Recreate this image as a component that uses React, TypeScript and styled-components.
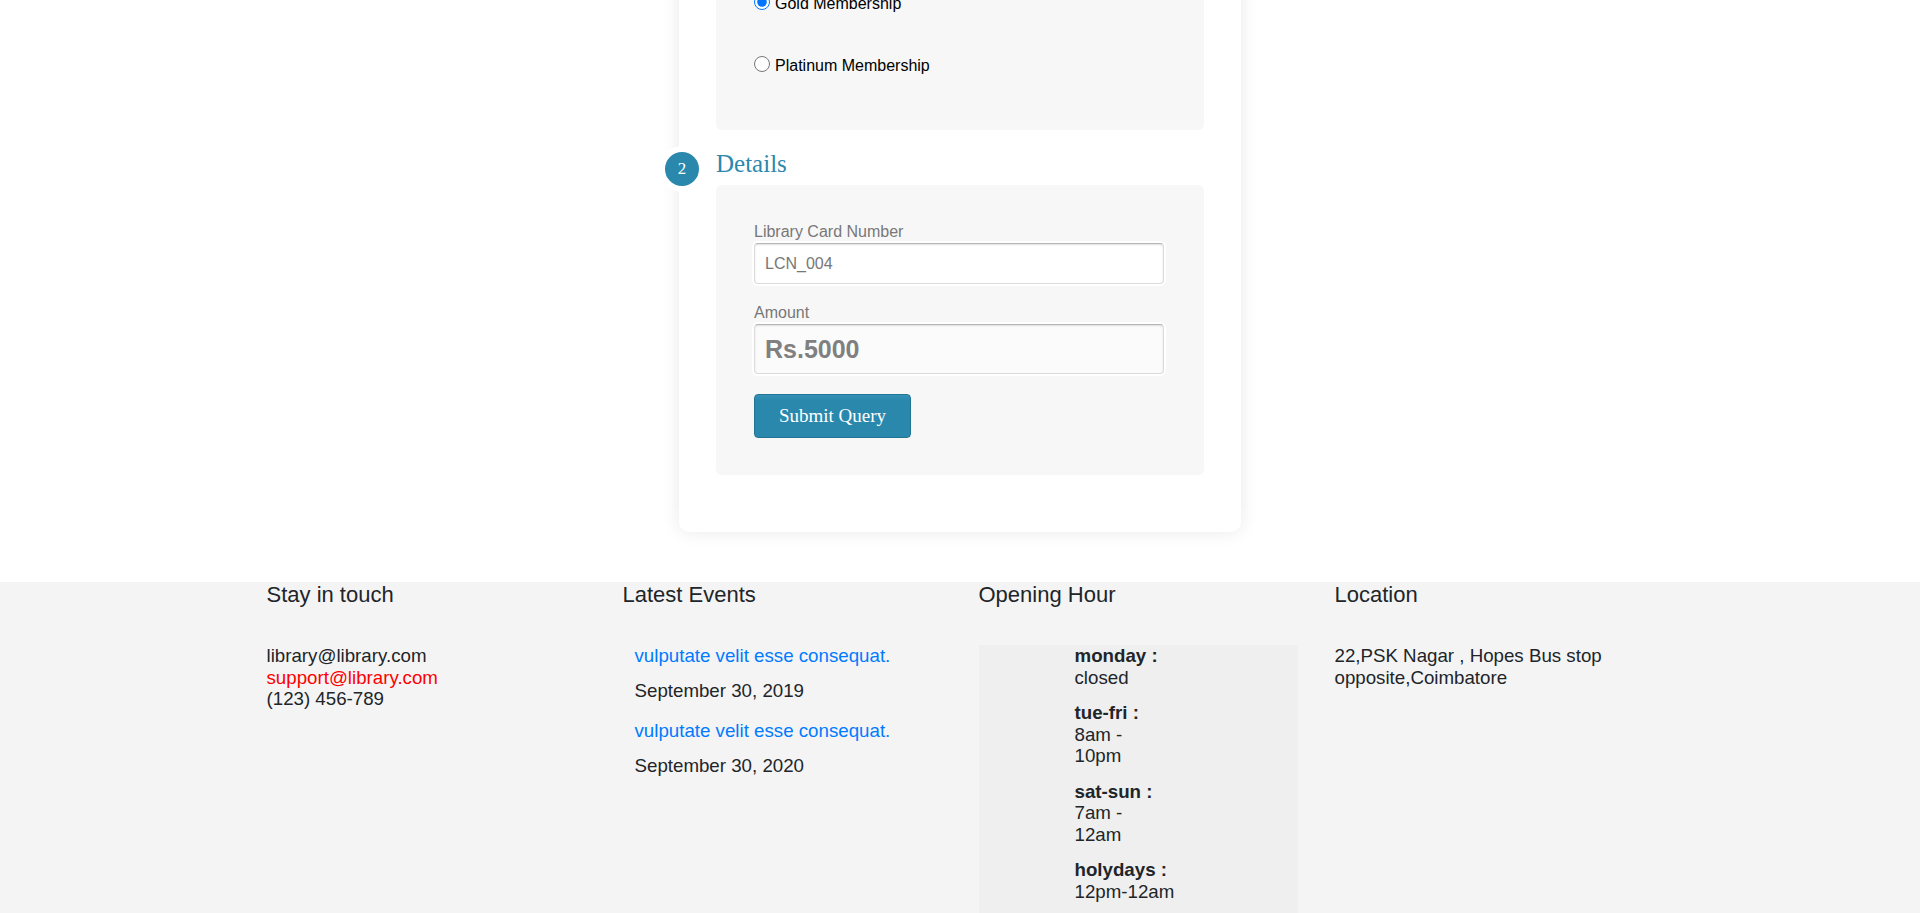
import styled, {createGlobalStyle} from 'styled-components';

const GlobalStyle = createGlobalStyle`
  body {
    margin: 0;
    background: #fff;
    font-family: "Liberation Sans", Arial, sans-serif;
    color: #212529;
  }
`;

const memberships = ['Silver Membership', 'Gold Membership', 'Platinum Membership'];

const events = [
  {title: 'vulputate velit esse consequat.', date: 'September 30, 2019'},
  {title: 'vulputate velit esse consequat.', date: 'September 30, 2020'},
];

const hours = [
  {day: 'monday :', time: 'closed', nowrap: false},
  {day: 'tue-fri :', time: '8am - 10pm', nowrap: false},
  {day: 'sat-sun :', time: '7am - 12am', nowrap: false},
  {day: 'holydays :', time: '12pm-12am', nowrap: true},
];

const App = () => {
  return (
    <>
      <GlobalStyle />
      <Main>
        <Card onSubmit={(e) => e.preventDefault()}>
          <SectionHeader $first>
            <StepBadge>1</StepBadge>
            <SectionTitle>Membership</SectionTitle>
          </SectionHeader>
          <Panel $top={26} $bottom={33}>
            {memberships.map((name) => (
              <RadioRow key={name}>
                <Radio type="radio" name="membership" defaultChecked={name === 'Gold Membership'} />
                {name}
              </RadioRow>
            ))}
          </Panel>

          <SectionHeader>
            <StepBadge>2</StepBadge>
            <SectionTitle>Details</SectionTitle>
          </SectionHeader>
          <Panel $top={37} $bottom={37}>
            <FieldLabel>Library Card Number</FieldLabel>
            <TextInput readOnly value="LCN_004" $height={41} $size={16} />
            <FieldLabel>Amount</FieldLabel>
            <TextInput readOnly value="Rs.5000" $height={50} $size={25} $bold />
            <SubmitButton type="submit">Submit Query</SubmitButton>
          </Panel>
        </Card>
      </Main>

      <Footer>
        <FooterColumn>
          <FooterHeading>Stay in touch</FooterHeading>
          <FooterText>library@library.com</FooterText>
          <FooterText $red>support@library.com</FooterText>
          <FooterText>(123) 456-789</FooterText>
        </FooterColumn>

        <FooterColumn>
          <FooterHeading>Latest Events</FooterHeading>
          <EventList>
            {events.map((ev) => (
              <li key={ev.date}>
                <EventLink href="#">{ev.title}</EventLink>
                <EventDate>{ev.date}</EventDate>
              </li>
            ))}
          </EventList>
        </FooterColumn>

        <FooterColumn>
          <FooterHeading>Opening Hour</FooterHeading>
          <HoursBox>
            {hours.map((h) => (
              <HoursItem key={h.day}>
                <dt>{h.day}</dt>
                <HoursTime $nowrap={h.nowrap}>{h.time}</HoursTime>
              </HoursItem>
            ))}
          </HoursBox>
        </FooterColumn>

        <FooterColumn>
          <FooterHeading>Location</FooterHeading>
          <FooterText>22,PSK Nagar , Hopes Bus stop opposite,Coimbatore</FooterText>
        </FooterColumn>
      </Footer>
    </>
  );
};

export default App;

const Main = styled.main`
  display: flex;
  justify-content: center;
  margin-top: -200px;
  padding-bottom: 50px;
`;

const Card = styled.form`
  width: 562px;
  box-sizing: border-box;
  background: #fff;
  border-radius: 10px;
  box-shadow: 0 0 18px rgba(0, 0, 0, 0.09);
  padding: 30px 37px 57px;
`;

const SectionHeader = styled.div<{$first?: boolean}>`
  position: relative;
  padding-top: ${(p) => (p.$first ? 0 : 15)}px;
  height: 39px;
  margin-bottom: 1px;
  margin-top: ${(p) => (p.$first ? 15 : 0)}px;
`;

const StepBadge = styled.span`
  position: absolute;
  left: -57px;
  bottom: -8px;
  width: 34px;
  height: 34px;
  border: 6px solid #fff;
  border-radius: 50%;
  background: #2b88ad;
  color: #fff;
  font-family: "Liberation Serif", "Times New Roman", serif;
  font-size: 17px;
  line-height: 34px;
  text-align: center;
`;

const SectionTitle = styled.h2`
  margin: 0;
  font-family: "Liberation Serif", "Times New Roman", serif;
  font-weight: 400;
  font-size: 25px;
  line-height: 38px;
  color: #2b88ad;
`;

const Panel = styled.div<{$top: number; $bottom: number}>`
  background: #f7f7f7;
  border-radius: 6px;
  padding: ${(p) => p.$top}px 38px ${(p) => p.$bottom}px;
`;

const RadioRow = styled.label`
  display: flex;
  align-items: center;
  gap: 5px;
  height: 62px;
  font-size: 16px;
  color: #000;
`;

const Radio = styled.input`
  width: 16px;
  height: 16px;
  margin: -4px 0 0;
`;

const FieldLabel = styled.label`
  display: block;
  font-size: 16px;
  line-height: 20px;
  color: #777;
  margin-bottom: 1px;
`;

const TextInput = styled.input<{$height: number; $size: number; $bold?: boolean}>`
  display: block;
  width: 410px;
  height: ${(p) => p.$height}px;
  box-sizing: border-box;
  margin: 0 0 19px;
  padding: 0 10px;
  border: 1px solid #dcdcdc;
  border-top-color: #b5b5b5;
  border-radius: 4px;
  box-shadow: inset 0 1px 2px rgba(0, 0, 0, 0.12), 0 0 0 2px #fff;
  background: ${(p) => (p.$bold ? '#fbfbfb' : '#fff')};
  font-family: "Liberation Sans", Arial, sans-serif;
  font-size: ${(p) => p.$size}px;
  font-weight: ${(p) => (p.$bold ? 700 : 400)};
  color: ${(p) => (p.$bold ? '#808080' : '#777')};
  outline: none;
`;

const SubmitButton = styled.button`
  display: block;
  width: 157px;
  height: 44px;
  margin-top: 20px;
  box-sizing: border-box;
  border: 1px solid #237596;
  border-radius: 4px;
  background: linear-gradient(#3591b6 0, #2a88ad 6px, #2a88ad 100%);
  color: #fff;
  font-family: "Liberation Serif", "Times New Roman", serif;
  font-size: 19px;
  cursor: pointer;
`;

const Footer = styled.footer`
  display: grid;
  grid-template-columns: repeat(4, 319px);
  column-gap: 37px;
  justify-content: center;
  background: #f4f4f4;
  padding-bottom: 40px;
`;

const FooterColumn = styled.div`
  font-size: 18.72px;
  line-height: 21.5px;
`;

const FooterHeading = styled.h3`
  margin: 0 0 38px;
  font-size: 22px;
  font-weight: 400;
  line-height: 1.15;
  color: #212529;
`;

const FooterText = styled.p<{$red?: boolean}>`
  margin: 0;
  color: ${(p) => (p.$red ? '#ff0000' : '#212529')};
`;

const EventList = styled.ul`
  list-style: none;
  margin: 0;
  padding-left: 12px;
`;

const EventLink = styled.a`
  display: block;
  margin-bottom: 13.5px;
  color: #007bff;
  text-decoration: none;
`;

const EventDate = styled.p`
  margin: 0 0 18.5px;
`;

const HoursBox = styled.dl`
  margin: 0;
  background: #efefef;
  padding: 0 0 24px 96px;
`;

const HoursItem = styled.div`
  width: 96px;
  margin-bottom: 14px;

  dt {
    font-weight: 700;
  }
`;

const HoursTime = styled.dd<{$nowrap?: boolean}>`
  margin: 0;
  white-space: ${(p) => (p.$nowrap ? 'nowrap' : 'normal')};
`;
